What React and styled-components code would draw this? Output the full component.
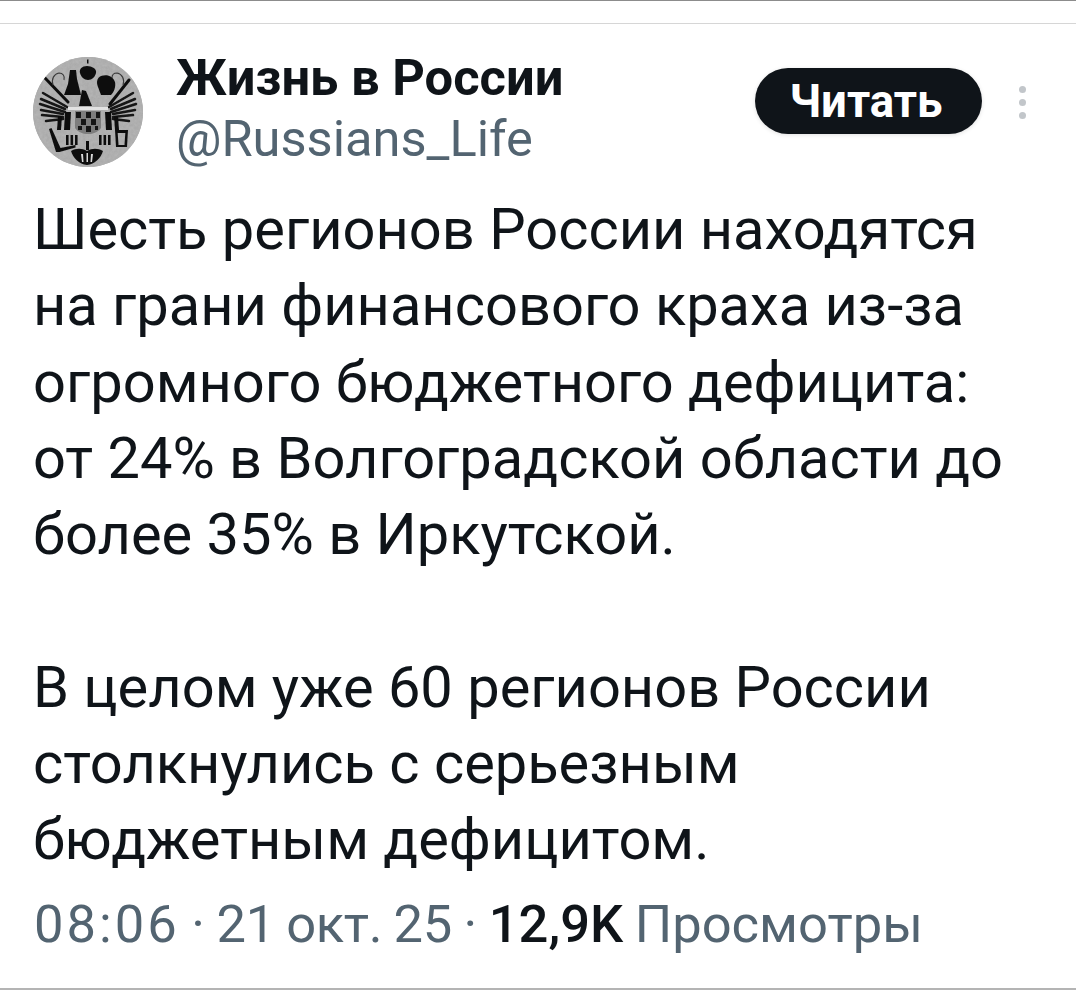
import React from "react";
import styled, { createGlobalStyle } from "styled-components";

const GlobalStyle = createGlobalStyle`
  html, body {
    margin: 0;
    padding: 0;
    background: #fff;
  }
  body {
    font-family: Roboto, "Liberation Sans", sans-serif;
  }
`;

const Page = styled.div`
  width: 1076px;
  height: 990px;
  box-sizing: border-box;
  overflow: hidden;
  background: #fff;
  border-top: 1px solid #8c8c8c;
  border-bottom: 2px solid #b4b4b4;
  display: flex;
  flex-direction: column;
`;

const TopStrip = styled.div`
  height: 22px;
  flex-shrink: 0;
  border-bottom: 1px solid #d6d6d6;
`;

const Header = styled.header`
  height: 167px;
  flex-shrink: 0;
  display: flex;
  align-items: flex-start;
  padding: 33px 0 0 33px;
  box-sizing: border-box;
`;

const AvatarWrap = styled.div`
  width: 110px;
  height: 110px;
  border-radius: 50%;
  overflow: hidden;
  flex-shrink: 0;
  background: #b0b0b0;
`;

const Names = styled.div`
  margin-left: 33px;
  width: 570px;
  display: flex;
  flex-direction: column;
`;

const Name = styled.div`
  font-size: 50.7px;
  line-height: 48px;
  margin-top: -3px;
  font-weight: 700;
  color: #0f1419;
  white-space: nowrap;
`;

const Handle = styled.div`
  font-size: 50.6px;
  line-height: 48px;
  margin-top: 13px;
  font-weight: 400;
  color: #536471;
  white-space: nowrap;
`;

const FollowButton = styled.button`
  width: 227px;
  height: 66px;
  margin-top: 11px;
  margin-left: 9px;
  border: none;
  border-radius: 33px;
  background: #0f1419;
  color: #fff;
  font-family: inherit;
  font-size: 45.6px;
  font-weight: 700;
  padding: 0 5px 0 0;
  box-shadow: 0 1px 4px rgba(0, 0, 0, 0.12);
`;

const MoreDots = styled.div`
  margin-left: 37px;
  margin-top: 29px;
  display: flex;
  flex-direction: column;
  gap: 6px;
`;

const Dot = styled.span`
  width: 7px;
  height: 7px;
  border-radius: 50%;
  background: #c2c6ca;
`;

const Body = styled.div`
  padding: 0 0 0 33px;
  font-size: 57.8px;
  line-height: 76.25px;
  color: #0f1419;
`;

const TextLine = styled.div`
  white-space: nowrap;
  min-height: 76.25px;
`;

const Meta = styled.div`
  margin-top: 17px;
  padding-left: 34px;
  font-size: 52.5px;
  line-height: 60px;
  word-spacing: -1.5px;
  color: #536471;
  white-space: nowrap;
`;

const Clock = styled.span`
  letter-spacing: 3px;
`;

const DateText = styled.span`
  letter-spacing: -0.3px;
`;

const Views = styled.span`
  color: #0f1419;
  font-weight: 500;
`;

// герб, грубо по точкам из референса
const Avatar = () => (
  <svg width="110" height="110" viewBox="0 0 110 110">
    <defs>
      <filter id="grain" x="0" y="0" width="100%" height="100%">
        <feTurbulence type="fractalNoise" baseFrequency="0.3" numOctaves="3" seed="4" />
        <feColorMatrix
          type="matrix"
          values="0 0 0 0 0.35  0 0 0 0 0.35  0 0 0 0 0.35  1.1 0 0 0 -0.25"
        />
      </filter>
      <filter id="soft">
        <feGaussianBlur stdDeviation="0.45" />
      </filter>
    </defs>
    <rect width="110" height="110" fill="#b4b4b4" />
    <rect width="110" height="110" filter="url(#grain)" opacity="0.75" />
    <g filter="url(#soft)">
      {/* крылья, большие перья */}
      <g stroke="#101010" strokeWidth="3" strokeLinecap="round" fill="none">
        <path d="M12 21L35 45" />
        <path d="M96 23L77 47" />
      </g>
      <g stroke="#141414" strokeWidth="2.5" strokeLinecap="round" fill="none">
        <path d="M10 36L34 50" />
        <path d="M8 42L32 52" />
        <path d="M7 47L32 55" />
        <path d="M8 53L30 57" />
        <path d="M9 58L30 60" />
        <path d="M13 64L30 62" />
        <path d="M100 36L76 50" />
        <path d="M102 42L78 52" />
        <path d="M103 47L78 55" />
        <path d="M102 53L80 57" />
        <path d="M100 58L80 60" />
        <path d="M96 64L80 62" />
      </g>
      {/* головы контуром */}
      <g stroke="#3a3a3a" strokeWidth="1.1" fill="none">
        <path d="M20 28c-2-6 1-11 6-12 4 0 6 3 5 7" />
        <path d="M90 28c2-6-1-11-6-12-4 0-5 2-5 5" />
      </g>
      <g fill="#101010">
        {/* короны и головы */}
        <path d="M54 2.5h1.5v4H54z" />
        <path d="M54 9c-5 0-8 3-7 7 1 4 4 7 8 7s7-3 8-7c1-4-4-7-9-7z" />
        <path d="M37 13h6l1 9 4 16H31l4-11z" />
        <path d="M68 19c6-2 12 0 14 6 1 5-1 10-4 13H68l-3-8c-2-5-1-9 3-11z" />
        <path d="M49 33l4 1 6 15h-13z" />
        {/* нижние перья */}
        <path d="M32 55h6l-1 18h-6z" />
        <path d="M25 59h4l-1 14h-4z" />
        <path d="M72 55h6l1 18h-6z" />
        <path d="M81 59h4l1 14h-4z" />
        {/* скипетр слева */}
        <path d="M16 72l2.5-1 9 20 15-3v2.5l-16 4.5h-3.5z" />
        {/* решётки у лап */}
        <path d="M33 78h2.6v10H33zM37.5 78h2.6v10h-2.6zM42 78h2.6v10H42z" />
        <path d="M66 78h2.6v10H66zM70.5 78h2.6v10h-2.6zM75 78h2.6v10H75z" />
        {/* держава справа */}
        <path d="M82 73h2.5l1 15h6l1-15H95l-1 17H83z" />
        <path d="M84 73h9v3h-9z" />
        <path d="M53 84h3v9h-3z" />
        {/* хвост */}
        <path d="M38 94c5-3 11-3 16 0 5-3 11-3 16 0-2 7-8 13-16 14-8-1-14-7-16-14z" />
      </g>
      {/* перевязь */}
      <path d="M35 50h40v3H35z" fill="#e2e2e2" />
      {/* щит с клетками */}
      <path d="M42 54h26v17c-3 4-8 6-13 6s-10-2-13-6z" fill="#7d7d7d" />
      <g fill="#161616">
        <path d="M43 55h5v6h-5zM53 55h5v6h-5zM63 55h4v6h-4z" />
        <path d="M48 62h5v6h-5zM58 62h5v6h-5z" />
        <path d="M45 69h4v4h-4zM53 69h5v6h-5zM62 69h3v4h-3z" />
      </g>
      <g fill="#d8d8d8">
        <path d="M48 97l1 8h1.5l-.5-8zM60 97l-1 8h-1.5l.5-8zM53.5 96h1.5v9h-1.5z" />
      </g>
    </g>
  </svg>
);

const paragraphs = [
  [
    "Шесть регионов России находятся",
    "на грани финансового краха из-за",
    "огромного бюджетного дефицита:",
    "от 24% в Волгоградской области до",
    "более 35% в Иркутской.",
  ],
  [],
  [
    "В целом уже 60 регионов России",
    "столкнулись с серьезным",
    "бюджетным дефицитом.",
  ],
];

export default function App() {
  return (
    <Page>
      <GlobalStyle />
      <TopStrip />
      <Header>
        <AvatarWrap>
          <Avatar />
        </AvatarWrap>
        <Names>
          <Name>Жизнь в России</Name>
          <Handle>@Russians_Life</Handle>
        </Names>
        <FollowButton>Читать</FollowButton>
        <MoreDots>
          <Dot />
          <Dot />
          <Dot />
        </MoreDots>
      </Header>
      <Body>
        {paragraphs.map((lines, i) =>
          lines.length ? (
            lines.map((line) => <TextLine key={line}>{line}</TextLine>)
          ) : (
            <TextLine key={i} />
          )
        )}
      </Body>
      <Meta>
        <Clock>08:06</Clock> · <DateText>21 окт. 25</DateText> · <Views>12,9K</Views> Просмотры
      </Meta>
    </Page>
  );
}
